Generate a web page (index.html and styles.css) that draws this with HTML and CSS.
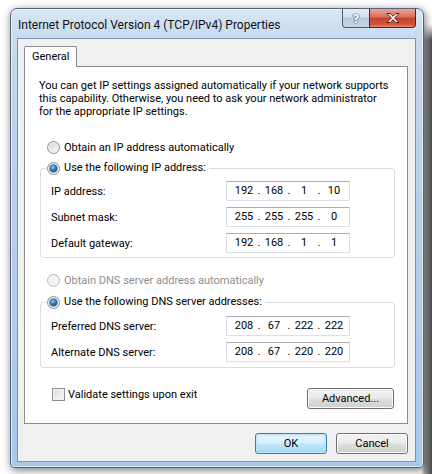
FILE: index.html
```html
<!DOCTYPE html>
<html lang="en">
<head>
<meta charset="utf-8">
<title>Internet Protocol Version 4 (TCP/IPv4) Properties</title>
<link rel="stylesheet" href="styles.css">
</head>
<body>
<div class="window">
  <div class="titlebar">
    <div class="title">Internet Protocol Version 4 (TCP/IPv4) Properties</div>
    <div class="caption-buttons">
      <div class="cbtn help"><span>?</span></div>
      <div class="cbtn close">
        <svg width="16" height="12" viewBox="0 0 16 12"><path d="M2 1.5h3.2L8 4.3l2.8-2.8H14L9.6 6 14 10.5h-3.2L8 7.7l-2.8 2.8H2L6.4 6z" fill="#fff" stroke="#5a1a14" stroke-width="1" stroke-linejoin="round"/></svg>
      </div>
    </div>
  </div>
  <div class="client">
    <div class="tabs"><div class="tab">General</div></div>
    <div class="panel">
      <p class="intro">You can get IP settings assigned automatically if your network supports<br>this capability. Otherwise, you need to ask your network administrator<br>for the appropriate IP settings.</p>

      <div class="radio-row first"><span class="radio"></span>Obtain an IP address automatically</div>
      <fieldset class="group">
        <legend class="legend"><span class="radio checked"></span>Use the following IP address:</legend>
        <div class="field-row"><span>IP address:</span><div class="ip"><span>192</span><i>.</i><span>168</span><i>.</i><span>1</span><i>.</i><span>10</span></div></div>
        <div class="field-row"><span>Subnet mask:</span><div class="ip"><span>255</span><i>.</i><span>255</span><i>.</i><span>255</span><i>.</i><span>0</span></div></div>
        <div class="field-row"><span>Default gateway:</span><div class="ip"><span>192</span><i>.</i><span>168</span><i>.</i><span>1</span><i>.</i><span>1</span></div></div>
      </fieldset>

      <div class="radio-row second disabled"><span class="radio"></span>Obtain DNS server address automatically</div>
      <fieldset class="group dns">
        <legend class="legend"><span class="radio checked"></span>Use the following DNS server addresses:</legend>
        <div class="field-row"><span>Preferred DNS server:</span><div class="ip"><span>208</span><i>.</i><span>67</span><i>.</i><span>222</span><i>.</i><span>222</span></div></div>
        <div class="field-row"><span>Alternate DNS server:</span><div class="ip"><span>208</span><i>.</i><span>67</span><i>.</i><span>220</span><i>.</i><span>220</span></div></div>
      </fieldset>

      <div class="footer-row">
        <div class="check-row"><span class="checkbox"></span>Validate settings upon exit</div>
        <button class="btn advanced">Advanced...</button>
      </div>
    </div>
    <div class="dialog-buttons">
      <button class="btn default">OK</button>
      <button class="btn">Cancel</button>
    </div>
  </div>
</div>
</body>
</html>
```

FILE: styles.css
```css
* { box-sizing: border-box; }
html, body { margin: 0; padding: 0; }
body {
  width: 432px;
  height: 474px;
  overflow: hidden;
  background:
    linear-gradient(to bottom, #ffffff 0, #ffffff 24px, rgba(255,255,255,0) 40px),
    linear-gradient(to right, #ffffff 0, #ffffff 421px, #9a9a9a 425px, #4a4a4a 432px);
  font-family: Roboto, "Noto Sans", sans-serif;
  font-size: 11px;
  color: #000;
}

.window {
  margin: 8px 0 0 10px;
  width: 414px;
  height: 460px;
  border: 1px solid #55677d;
  border-radius: 7px 7px 4px 4px;
  padding: 0 7px 5px 6px;
  background: linear-gradient(to bottom, #d9e6f4 0, #c8dbef 28px, #bcd3ea 120px, #b0cce9 330px, #a6c8ea 100%);
  box-shadow: inset 0 0 0 1px rgba(255,255,255,0.55), 1px 2px 8px rgba(0,0,0,0.55);
}

.titlebar {
  height: 29px;
  display: flex;
  justify-content: space-between;
  align-items: flex-start;
}
.title {
  margin-left: 1px;
  padding-top: 9px;
  line-height: 15px;
  font-size: 12px;
  color: #111;
  white-space: nowrap;
}
.caption-buttons {
  display: flex;
}
.cbtn {
  height: 19px;
  display: flex;
  align-items: center;
  justify-content: center;
  border: 1px solid #4d5d72;
  border-top: none;
}
.cbtn.help {
  width: 27px;
  border-radius: 0 0 0 4px;
  border-right: none;
  background: linear-gradient(to bottom, #e6eef7 0, #d3dfec 45%, #b9c9dc 50%, #c7d6e6 100%);
}
.cbtn.help span {
  font-family: "DejaVu Sans", sans-serif;
  font-weight: bold;
  font-size: 13px;
  line-height: 13px;
  color: #fff;
  text-shadow: 0 0 1px #394a5e, 0 0 1px #394a5e, 0 0 1px #394a5e;
}
.cbtn.close {
  width: 47px;
  border-radius: 0 0 4px 0;
  border-color: #5b1f18;
  background: linear-gradient(to bottom, #e9a596 0, #d9705e 45%, #c5412f 50%, #d0533b 85%, #e58b66 100%);
}

.client {
  height: 424px;
  border: 1px solid #7d93ad;
  background: #f0f0f0;
  padding: 7px 7px 0 6px;
}

.tabs {
  display: flex;
  height: 20px;
}
.tab {
  position: relative;
  width: 53px;
  height: 21px;
  border: 1px solid #898c95;
  border-bottom: none;
  border-radius: 2px 2px 0 0;
  background: #fff;
  padding: 2px 0 0 7px;
  line-height: 15px;
}

.panel {
  height: 358px;
  border: 1px solid #898c95;
  background: #fff;
  padding: 12px 13px 0 14px;
}

.intro {
  margin: 0;
  line-height: 13px;
  white-space: nowrap;
}

.radio-row {
  display: flex;
  align-items: center;
  height: 16px;
  margin-left: 8px;
  white-space: nowrap;
}
.radio-row.first { margin-top: 21px; }
.radio-row.second { margin-top: 14px; }
.radio-row.disabled { color: #8d8d8d; }

.radio {
  flex: none;
  width: 13px;
  height: 13px;
  border-radius: 50%;
  border: 1px solid #8e8f8f;
  margin-right: 4px;
  background: radial-gradient(circle at 65% 70%, #f6f6f6 0, #e4e4e4 45%, #cfcfcf 100%);
  box-shadow: inset 0 0 0 1px #f4f4f4;
  display: flex;
  align-items: center;
  justify-content: center;
}
.disabled .radio {
  border-color: #b9b9b9;
  background: #f4f4f4;
}
.radio.checked::after {
  content: "";
  width: 7px;
  height: 7px;
  border-radius: 50%;
  background: radial-gradient(circle at 40% 35%, #8fd4f8 0, #2f7fc0 40%, #14497a 80%, #0f3558 100%);
  box-shadow: 0 0 0 0.5px #1d3f5f;
}

.group {
  width: 355px;
  min-width: 0;
  margin: 5px 0 0 1px;
  border: 1px solid #d5dfe5;
  border-radius: 3px;
  padding: 5px 44px 4px 10px;
}
.group.dns {
  margin-top: 6px;
  padding-top: 6px;
  padding-bottom: 5px;
}
.legend {
  display: flex;
  align-items: center;
  height: 16px;
  line-height: 16px;
  padding: 0 3px 0 0;
  margin-left: -4px;
  white-space: nowrap;
}

.field-row {
  display: flex;
  justify-content: space-between;
  align-items: center;
  height: 20px;
  white-space: nowrap;
}
.field-row + .field-row { margin-top: 6px; }

.ip {
  width: 124px;
  height: 20px;
  display: flex;
  align-items: center;
  padding-left: 5px;
  border: 1px solid #dbdfe6;
  border-top-color: #abadb3;
  background: #fff;
  line-height: 18px;
}
.ip span {
  width: 24px;
  text-align: center;
}
.ip i {
  font-style: normal;
  width: 6px;
  text-align: center;
}

.footer-row {
  margin-top: 20px;
  display: flex;
  justify-content: space-between;
  align-items: flex-start;
}
.check-row {
  display: flex;
  align-items: center;
  height: 13px;
  line-height: 13px;
  margin-left: 13px;
  white-space: nowrap;
}
.checkbox {
  flex: none;
  width: 13px;
  height: 13px;
  border: 1px solid #8e8f8f;
  margin-right: 3px;
  background: linear-gradient(135deg, #d9d9d9 0, #ececec 60%, #f7f7f7 100%);
  box-shadow: inset 0 0 0 1px #f4f4f4;
}

.btn {
  font-family: Roboto, "Noto Sans", sans-serif;
  font-size: 11px;
  color: #000;
  height: 21px;
  padding: 0;
  line-height: 17px;
  border: 1px solid #707070;
  border-radius: 3px;
  background: linear-gradient(to bottom, #f2f2f2 0, #ebebeb 48%, #dddddd 52%, #cfcfcf 100%);
  box-shadow: inset 0 0 0 1px #fbfbfb;
}
.btn.advanced { width: 87px; }

.dialog-buttons {
  margin-top: 9px;
  display: flex;
  justify-content: flex-end;
  gap: 9px;
}
.dialog-buttons .btn { width: 72px; }
.btn.default {
  border-color: #3c7fb1;
  background: linear-gradient(to bottom, #eaf6fd 0, #d9f0fc 48%, #bee6fd 52%, #a7d9f5 100%);
  box-shadow: inset 0 0 0 1px #c4e5f6, inset 0 0 2px 1px #97d3f1;
}
```
